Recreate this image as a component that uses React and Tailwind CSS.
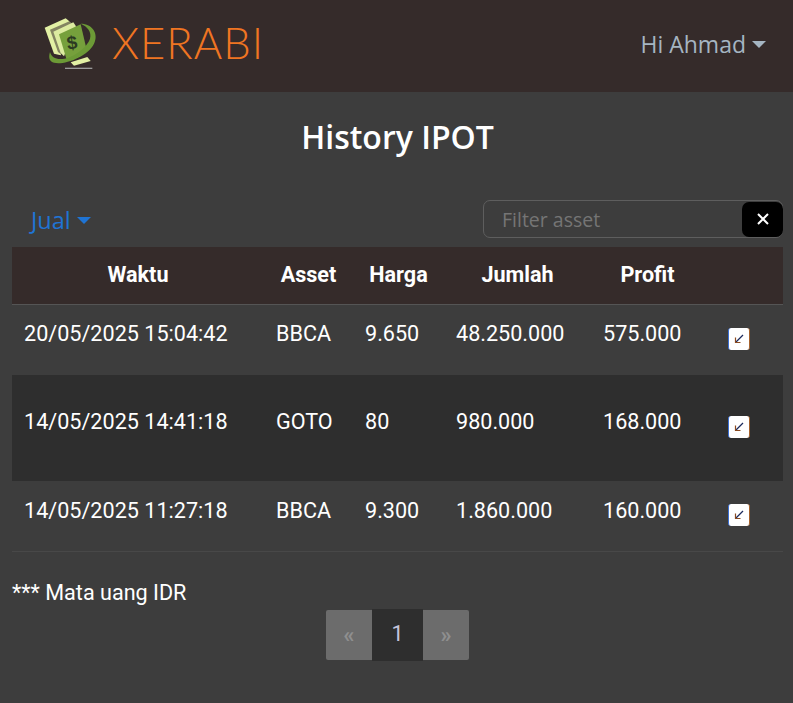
import React from "react";

const rows = [
  { waktu: "20/05/2025 15:04:42", asset: "BBCA", harga: "9.650", jumlah: "48.250.000", profit: "575.000", h: "h-[71px]", pt: "pt-[13px]", pb: "pt-[23px]", bg: "" },
  { waktu: "14/05/2025 14:41:18", asset: "GOTO", harga: "80", jumlah: "980.000", profit: "168.000", h: "h-[106px]", pt: "pt-[31px]", pb: "pt-[41px]", bg: "bg-[#2e2e2e]" },
  { waktu: "14/05/2025 11:27:18", asset: "BBCA", harga: "9.300", jumlah: "1.860.000", profit: "160.000", h: "h-[70px] border-b border-[#484848]", pt: "pt-[14px]", pb: "pt-[23px]", bg: "" },
];

const Logo = () => (
  <svg width="55" height="53" viewBox="40 20 165 159">
    <path d="M42 52 L105 24 L125 40 L90 135 L70 130 Z" fill="#e2f0a4" />
    <path d="M58 58 L118 32 L130 44 L95 135 L82 125 Z" fill="#352b2a" opacity="0.55" />
    <path d="M68 64 L128 36 L136 48 L100 138 L90 128 Z" fill="#dcebA0" />
    <path d="M85 72 L150 42 L168 118 L108 148 Z" fill="#76a03c" />
    <path d="M120 156 L170 140 L180 152 L130 166 Z" fill="#e2f0a4" />
    <path d="M150 40 C185 40 205 70 190 100 C170 140 100 165 70 157 C58 154 52 145 58 125 C62 140 75 148 95 146 C130 142 170 110 178 85 C184 65 170 48 150 40 Z" fill="#6c9a36" />
    <text x="124" y="116" textAnchor="middle" fontSize="56" fontWeight="700" fill="#2c3a22" fontFamily="Liberation Sans, sans-serif" transform="rotate(-8 124 98)">$</text>
    <rect x="103" y="172" width="82" height="4" fill="#9a9a9a" />
  </svg>
);

const Caret = ({ className }) => (
  <span className={`inline-block w-0 h-0 border-x-[7px] border-x-transparent border-t-[7px] ${className}`} />
);

const ActionButton = () => (
  <button className="w-[22px] h-[22px] bg-white rounded-[3px] flex items-center justify-center border-l border-l-[#3b6fd4] border-r border-r-[#a5622e]">
    <svg width="12" height="12" viewBox="0 0 12 12" fill="none" stroke="#1b2a5c" strokeWidth="1.2">
      <path d="M10 2 L2.5 9.5" />
      <path d="M2.5 4.5 V9.5 H7.5" stroke="#8a4a20" />
    </svg>
  </button>
);

export default function App() {
  return (
    <div className="min-h-[703px] bg-[#3d3d3d] text-white font-['Roboto',sans-serif]">
      <header className="h-[92px] bg-[#352b2a] flex items-center justify-between pl-[44px] pr-[27px]">
        <div className="flex items-center gap-[13px] pb-[6px]">
          <Logo />
          <span className="font-['Lato',sans-serif] font-light text-[43.5px] leading-none tracking-[1px] text-[#f07522]">XERABI</span>
        </div>
        <div className="flex items-center gap-[6px] pb-[4px] text-[#a5b5c2] text-[23px] font-['Open_Sans',sans-serif]">
          Hi Ahmad
          <Caret className="border-t-[#a5b5c2]" />
        </div>
      </header>

      <main className="px-[12px] pr-[10px]">
        <h1 className="pt-[26px] text-center font-['Open_Sans',sans-serif] font-semibold text-[32px] leading-[38px]">History IPOT</h1>

        <div className="mt-[43px] h-[39px] flex items-center justify-between">
          <div className="pl-[19px] pt-[4px] flex items-center gap-[6px] text-[#1f74d4] text-[23.5px] font-['Open_Sans',sans-serif]">
            Jual
            <Caret className="border-t-[#1f74d4]" />
          </div>
          <div className="relative w-[300px] h-[38px] border border-[#5e5e5e] rounded-[7px] flex items-center pl-[18px] pt-[3px] font-['Open_Sans',sans-serif] text-[19.5px] text-[#757575]">
            Filter asset
            <button className="absolute -right-px top-[1px] w-[41px] h-[35px] bg-black rounded-[7px] flex items-center justify-center">
              <svg width="12" height="12" viewBox="0 0 12 12" stroke="white" strokeWidth="2">
                <path d="M1 1 L11 11 M11 1 L1 11" />
              </svg>
            </button>
          </div>
        </div>

        <table className="mt-[9px] w-[771px] table-fixed border-collapse text-[21.6px]">
          <colgroup>
            <col className="w-[252px]" />
            <col className="w-[89px]" />
            <col className="w-[91px]" />
            <col className="w-[147px]" />
            <col className="w-[113px]" />
            <col className="w-[79px]" />
          </colgroup>
          <thead>
            <tr className="h-[57px] bg-[#352b2a] border-b border-[#555555] font-bold">
              <th>Waktu</th>
              <th>Asset</th>
              <th>Harga</th>
              <th>Jumlah</th>
              <th>Profit</th>
              <th></th>
            </tr>
          </thead>
          <tbody>
            {rows.map((r) => (
              <tr key={r.waktu} className={`${r.h} ${r.bg} align-top`}>
                <td className={`px-[12px] ${r.pt}`}>{r.waktu}</td>
                <td className={`px-[12px] ${r.pt}`}>{r.asset}</td>
                <td className={`px-[12px] ${r.pt}`}>{r.harga}</td>
                <td className={`px-[12px] ${r.pt}`}>{r.jumlah}</td>
                <td className={`px-[12px] ${r.pt}`}>{r.profit}</td>
                <td className={`pl-[24px] ${r.pb}`}><ActionButton /></td>
              </tr>
            ))}
          </tbody>
        </table>

        <p className="mt-[27px] text-[21.6px] leading-[28px]">*** Mata uang IDR</p>

        <nav className="mt-[2px] flex justify-center">
          <span className="w-[46px] h-[50px] mt-px bg-[#6c6c6c] rounded-l-[2px] flex items-center justify-center text-[#8f8f8f] font-bold text-[22px]">«</span>
          <span className="w-[51px] h-[52px] bg-[#2e2e2e] flex items-center justify-center text-[#c5c5dc] text-[21.6px]">1</span>
          <span className="w-[46px] h-[50px] mt-px bg-[#6c6c6c] rounded-r-[2px] flex items-center justify-center text-[#8f8f8f] font-bold text-[22px]">»</span>
        </nav>
      </main>
    </div>
  );
}
